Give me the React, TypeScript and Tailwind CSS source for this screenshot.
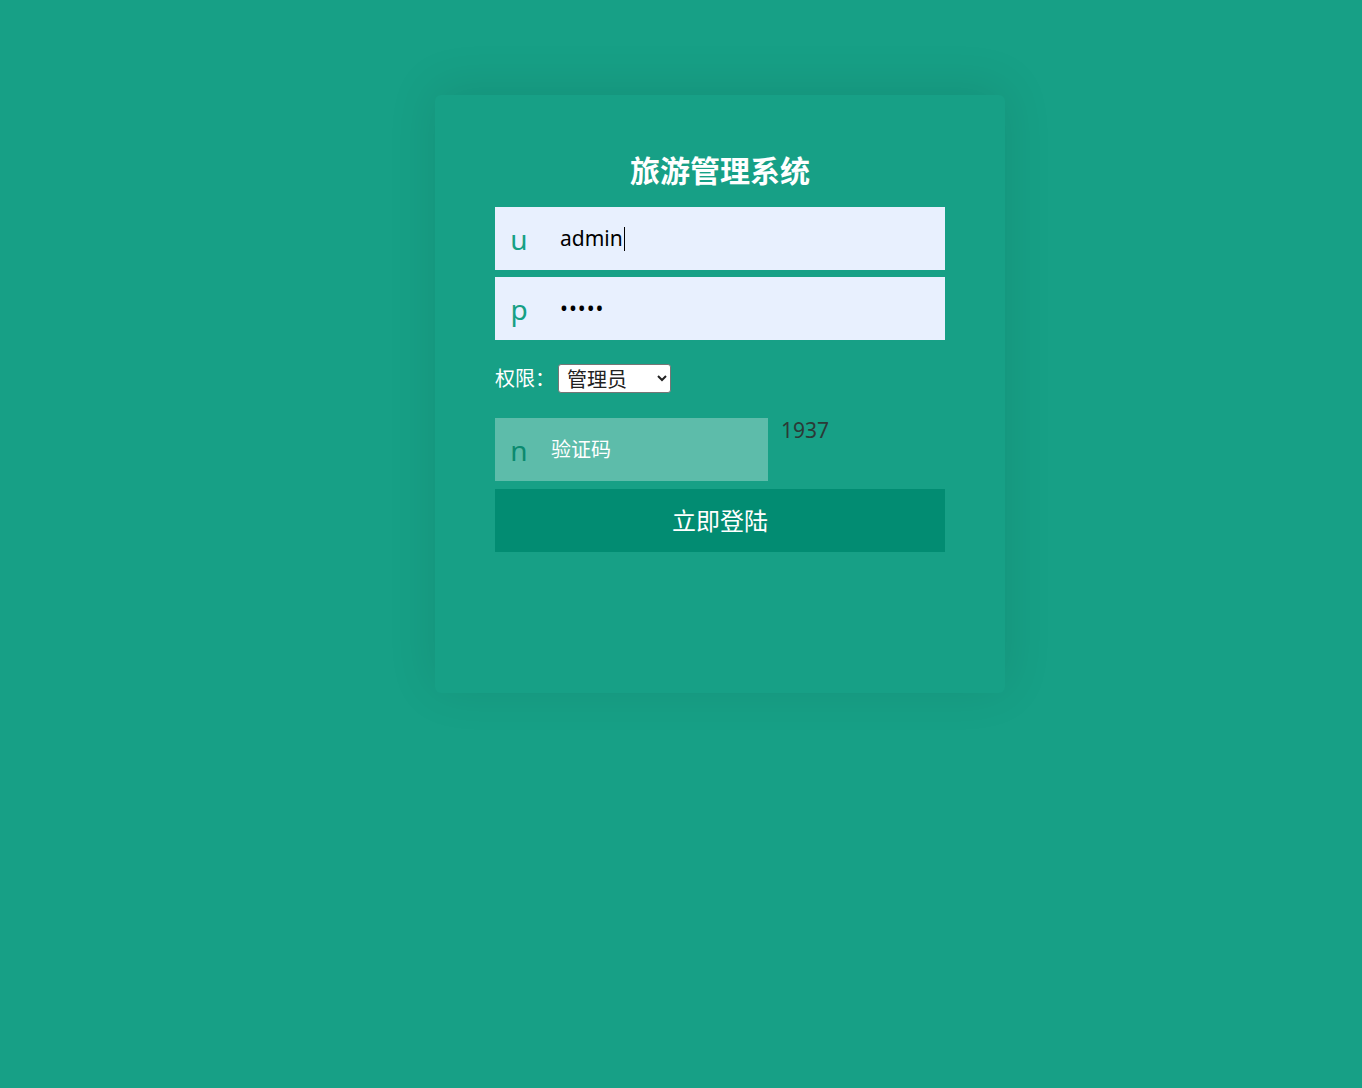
import React from "react";

const font = { fontFamily: '"Noto Sans", "Noto Sans CJK SC", sans-serif' };

export default function App() {
  return (
    <div className="min-h-[1088px] bg-[#17a086] pt-[95px]" style={font}>
      <div className="ml-[435px] w-[570px] h-[598px] rounded-[6px] bg-[#17a086] shadow-[0_-6px_50px_rgba(0,0,0,0.1)] px-[60px] pt-[55px]">
        <h1 className="text-center text-[30px] font-bold text-white leading-[42px] mb-[15px]">旅游管理系统</h1>

        <div className="flex h-[63px] items-center bg-[#e8f0fe] mb-[7px]">
          <span className="w-[48px] text-center text-[28px] text-[#16a085] leading-none">u</span>
          <div className="ml-[17px] flex flex-1 items-center text-[21px] text-black">
            <span>admin</span>
            <span className="ml-[1px] h-[24px] w-px bg-black" />
          </div>
        </div>

        <div className="flex h-[63px] items-center bg-[#e8f0fe]">
          <span className="w-[48px] text-center text-[28px] text-[#16a085] leading-none">p</span>
          <input
            type="password"
            defaultValue="12345"
            className="ml-[17px] flex-1 bg-transparent text-[21px] text-black outline-none tracking-[1px]"
          />
        </div>

        <div className="flex items-center mt-[24px] h-[29px]">
          <span className="text-[20px] text-white">权限：</span>
          <select className="ml-[3px] h-[29px] w-[113px] rounded-[3px] border border-[#767676] bg-white text-[20px] text-[#222] pl-[4px]">
            <option>管理员</option>
            <option>用户</option>
          </select>
        </div>

        <div className="flex items-start mt-[25px]">
          <div className="flex h-[63px] w-[273px] items-center bg-white/30">
            <span className="w-[48px] text-center text-[28px] text-[#0b8a6f] leading-none">n</span>
            <input
              placeholder="验证码"
              className="ml-[8px] w-[200px] bg-transparent text-[20px] text-white placeholder:text-white outline-none"
            />
          </div>
          <span className="ml-[13px] text-[21px] text-[#2b3a36] leading-[24px]">1937</span>
        </div>

        <button className="mt-[8px] h-[63px] w-full bg-[#028c72] text-[24px] text-white">立即登陆</button>
      </div>
    </div>
  );
}
